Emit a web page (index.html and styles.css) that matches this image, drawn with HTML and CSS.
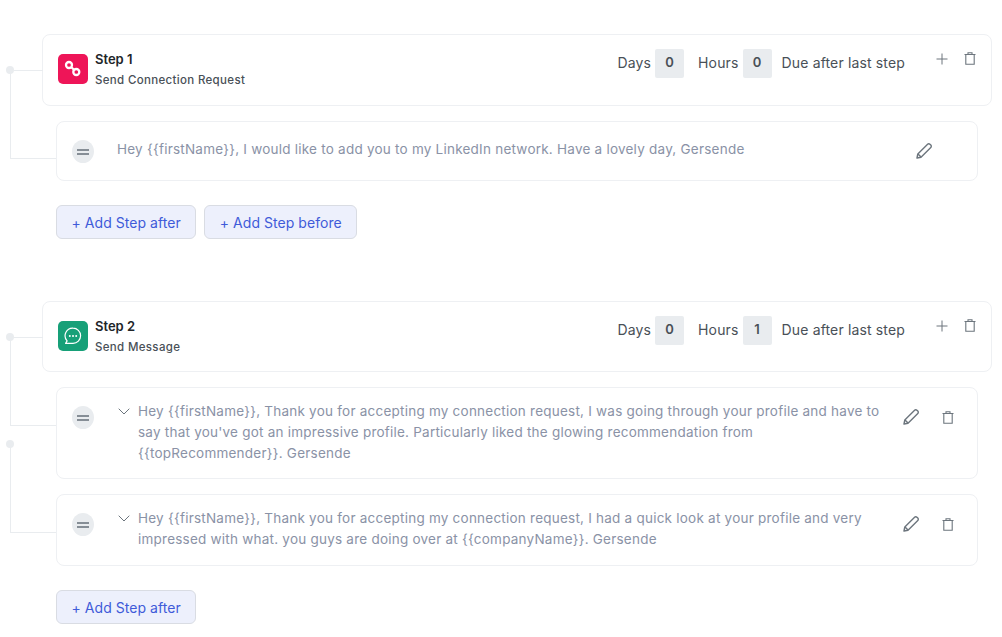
FILE: index.html
```html
<!DOCTYPE html>
<html lang="en">

<head>
    <meta charset="UTF-8">
    <meta name="viewport" content="width=device-width, initial-scale=1.0">
    <title>Sequence</title>
    <link rel="stylesheet" href="styles.css">
</head>

<body>
    <main class="Sequence">
        <!-- STEP 1 -->
        <section class="Step">
            <header class="Step-card">
                <span class="Step-dot"></span>
                <div class="Step-icon Step-icon--pink">
                    <svg width="18" height="18" viewBox="0 0 18 18" fill="none" stroke="#fff" stroke-width="2.3">
                        <circle cx="5" cy="5" r="3" />
                        <circle cx="12.3" cy="12" r="3" />
                        <path d="M7 7l3.3 3" />
                    </svg>
                </div>
                <div class="Step-info">
                    <h2 class="Step-title">Step 1</h2>
                    <p class="Step-type">Send Connection Request</p>
                </div>
                <div class="Step-delay">
                    <span class="Step-label">Days</span>
                    <span class="Step-value">0</span>
                    <span class="Step-label Step-label--hours">Hours</span>
                    <span class="Step-value">0</span>
                    <span class="Step-label Step-label--due">Due after last step</span>
                </div>
                <div class="Step-actions">
                    <svg class="Icon" width="12" height="12" viewBox="0 0 12 12" fill="none" stroke="#6c757d" stroke-width="1">
                        <path d="M6 .5v11M.5 6h11" />
                    </svg>
                    <svg class="Icon" width="12" height="13" viewBox="0 0 12 13" fill="none" stroke="#6c757d" stroke-width="1.1">
                        <path d="M.5 2.5h11M4 2.5V.8h4v1.7M1.8 2.5v9.8h8.4V2.5" />
                    </svg>
                </div>
            </header>

            <article class="Message Message--short">
                <span class="Message-line"></span>
                <span class="Message-handle"><i></i><i></i></span>
                <p class="Message-text">Hey {{firstName}}, I would like to add you to my LinkedIn network. Have a lovely day, Gersende</p>
                <div class="Message-actions">
                    <svg class="Icon" width="16" height="16" viewBox="0 0 16 16" fill="none" stroke="#6c757d" stroke-width="1.4" stroke-linejoin="round">
                        <path d="M1 15l.8-4L11.6 1.2a1.6 1.6 0 0 1 2.3 0l.9.9a1.6 1.6 0 0 1 0 2.3L5 14.2z" />
                        <path d="M2 11l3 3" />
                    </svg>
                </div>
            </article>

            <div class="Step-buttons">
                <button class="Button">+ Add Step after</button>
                <button class="Button">+ Add Step before</button>
            </div>
        </section>

        <!-- STEP 2 -->
        <section class="Step">
            <header class="Step-card Step-card--second">
                <span class="Step-dot"></span>
                <div class="Step-icon Step-icon--green">
                    <svg width="18" height="18" viewBox="0 0 18 18" fill="none">
                        <path d="M9 1.2a7.6 7.6 0 0 1 0 15.2H1.6l1.5-2.5A7.6 7.6 0 0 1 9 1.2z" stroke="#fff" stroke-width="1.2" stroke-linejoin="round" />
                        <circle cx="5.8" cy="8.9" r="1" fill="#fff" />
                        <circle cx="9" cy="8.9" r="1" fill="#fff" />
                        <circle cx="12.2" cy="8.9" r="1" fill="#fff" />
                    </svg>
                </div>
                <div class="Step-info">
                    <h2 class="Step-title">Step 2</h2>
                    <p class="Step-type">Send Message</p>
                </div>
                <div class="Step-delay">
                    <span class="Step-label">Days</span>
                    <span class="Step-value">0</span>
                    <span class="Step-label Step-label--hours">Hours</span>
                    <span class="Step-value">1</span>
                    <span class="Step-label Step-label--due">Due after last step</span>
                </div>
                <div class="Step-actions">
                    <svg class="Icon" width="12" height="12" viewBox="0 0 12 12" fill="none" stroke="#6c757d" stroke-width="1">
                        <path d="M6 .5v11M.5 6h11" />
                    </svg>
                    <svg class="Icon" width="12" height="13" viewBox="0 0 12 13" fill="none" stroke="#6c757d" stroke-width="1.1">
                        <path d="M.5 2.5h11M4 2.5V.8h4v1.7M1.8 2.5v9.8h8.4V2.5" />
                    </svg>
                </div>
            </header>

            <article class="Message">
                <span class="Message-line"></span>
                <span class="Message-handle"><i></i><i></i></span>
                <svg class="Message-chevron" width="12" height="7" viewBox="0 0 12 7" fill="none" stroke="#6c757d" stroke-width="1">
                    <path d="M.7.7L6 6l5.3-5.3" />
                </svg>
                <p class="Message-text">Hey {{firstName}}, Thank you for accepting my connection request, I was going through your profile and have to<br>say that you've got an impressive profile. Particularly liked the glowing recommendation from<br>{{topRecommender}}. Gersende</p>
                <div class="Message-actions">
                    <svg class="Icon" width="16" height="16" viewBox="0 0 16 16" fill="none" stroke="#6c757d" stroke-width="1.4" stroke-linejoin="round">
                        <path d="M1 15l.8-4L11.6 1.2a1.6 1.6 0 0 1 2.3 0l.9.9a1.6 1.6 0 0 1 0 2.3L5 14.2z" />
                        <path d="M2 11l3 3" />
                    </svg>
                    <svg class="Icon" width="12" height="13" viewBox="0 0 12 13" fill="none" stroke="#6c757d" stroke-width="1.1">
                        <path d="M.5 2.5h11M4 2.5V.8h4v1.7M1.8 2.5v9.8h8.4V2.5" />
                    </svg>
                </div>
            </article>

            <article class="Message">
                <span class="Message-line"></span>
                <span class="Message-handle"><i></i><i></i></span>
                <svg class="Message-chevron" width="12" height="7" viewBox="0 0 12 7" fill="none" stroke="#6c757d" stroke-width="1">
                    <path d="M.7.7L6 6l5.3-5.3" />
                </svg>
                <p class="Message-text">Hey {{firstName}}, Thank you for accepting my connection request, I had a quick look at your profile and very<br>impressed with what. you guys are doing over at {{companyName}}. Gersende</p>
                <div class="Message-actions">
                    <svg class="Icon" width="16" height="16" viewBox="0 0 16 16" fill="none" stroke="#6c757d" stroke-width="1.4" stroke-linejoin="round">
                        <path d="M1 15l.8-4L11.6 1.2a1.6 1.6 0 0 1 2.3 0l.9.9a1.6 1.6 0 0 1 0 2.3L5 14.2z" />
                        <path d="M2 11l3 3" />
                    </svg>
                    <svg class="Icon" width="12" height="13" viewBox="0 0 12 13" fill="none" stroke="#6c757d" stroke-width="1.1">
                        <path d="M.5 2.5h11M4 2.5V.8h4v1.7M1.8 2.5v9.8h8.4V2.5" />
                    </svg>
                </div>
            </article>

            <div class="Step-buttons">
                <button class="Button">+ Add Step after</button>
            </div>
        </section>
    </main>
</body>

</html>
```

FILE: styles.css
```css
/* VARIABLES */
:root {
    --color-border: #eef0f3;
    --color-line: #e9ecef;
    --color-text: #8a92a6;
    --color-dark: #495057;
    --color-blue: #3f5bd9;
}

/* RESET */
* {
    margin: 0;
    padding: 0;
    box-sizing: border-box;
    font-family: Inter, "Noto Sans", sans-serif;
}

body {
    background-color: #fff;
    overflow: hidden;
}

.Sequence {
    padding: 34px 10px 0 42px;
    display: flex;
    flex-direction: column;
    gap: 62px;
}

.Step {
    display: flex;
    flex-direction: column;
}

/* STEP HEADER */
.Step-card {
    position: relative;
    height: 72px;
    padding: 14px 15px 0 15px;
    display: flex;
    align-items: flex-start;
    border: 1px solid var(--color-border);
    border-radius: 8px;
}

.Step-card--second {
    height: 71px;
}

.Step-dot {
    position: absolute;
    left: -37px;
    top: 31px;
    width: 8px;
    height: 8px;
    border-radius: 50%;
    background-color: var(--color-line);
}

.Step-dot::after {
    content: "";
    position: absolute;
    left: 8px;
    top: 4px;
    width: 29px;
    height: 1px;
    background-color: var(--color-line);
}

.Step-icon {
    width: 30px;
    height: 30px;
    margin-top: 5px;
    margin-right: 7px;
    border-radius: 5px;
    display: flex;
    align-items: center;
    justify-content: center;
}

.Step-icon--pink {
    background-color: #ee1558;
}

.Step-icon--green {
    background-color: #17a078;
}

.Step-info {
    flex: 1;
}

.Step-title {
    font-size: 13px;
    line-height: 20px;
    font-weight: 600;
    color: #212529;
}

.Step-type {
    margin-top: 1px;
    font-size: 11.5px;
    line-height: 20px;
    font-weight: 500;
    letter-spacing: 0.33px;
    color: var(--color-dark);
}

.Step-delay {
    display: flex;
    align-items: center;
    margin-right: 31px;
}

.Step-label {
    font-size: 14px;
    letter-spacing: 0.15px;
    line-height: 27px;
    height: 29px;
    color: var(--color-dark);
}

.Step-label--hours {
    margin-left: 14px;
}

.Step-label--due {
    margin-left: 10px;
}

.Step-value {
    width: 29px;
    height: 29px;
    margin-left: 4px;
    border-radius: 2px;
    background-color: var(--color-line);
    font-size: 13px;
    font-weight: 600;
    line-height: 27px;
    text-align: center;
    color: var(--color-dark);
}

.Step-actions {
    display: flex;
    align-items: center;
    gap: 16px;
    margin-top: 3px;
}

.Icon {
    display: block;
}

/* MESSAGES */
.Message {
    position: relative;
    min-height: 72px;
    margin-top: 15px;
    margin-left: 14px;
    margin-right: 14px;
    padding: 13px 0 14px 60px;
    display: flex;
    align-items: flex-start;
    border: 1px solid var(--color-border);
    border-radius: 8px;
}

.Message--short {
    min-height: 60px;
    padding-top: 17px;
}

.Message-line {
    position: absolute;
    left: -47px;
    top: -50px;
    width: 46px;
    height: 88px;
    border-left: 1px solid var(--color-line);
    border-bottom: 1px solid var(--color-line);
}

.Message--short .Message-line {
    top: -51px;
}

.Message + .Message::before {
    content: "";
    position: absolute;
    left: -51px;
    top: -55px;
    width: 8px;
    height: 8px;
    border-radius: 50%;
    background-color: var(--color-line);
}

.Message-handle {
    position: absolute;
    left: 15px;
    top: 18px;
    width: 22px;
    height: 23px;
    border-radius: 50%;
    background-color: var(--color-line);
    display: flex;
    flex-direction: column;
    align-items: center;
    justify-content: center;
    gap: 2px;
}

.Message-handle i {
    display: block;
    width: 12px;
    height: 2px;
    background-color: #868e96;
}

.Message-chevron {
    flex-shrink: 0;
    margin-top: 7px;
    margin-left: 1px;
    margin-right: 8px;
}

.Message-text {
    flex: 1;
    font-size: 13.5px;
    letter-spacing: 0.23px;
    line-height: 21px;
    color: var(--color-text);
}

.Message-actions {
    position: absolute;
    top: 21px;
    right: 23px;
    display: flex;
    align-items: center;
    gap: 23px;
}

.Message--short .Message-actions {
    right: 45px;
}

/* BUTTONS */
.Step-buttons {
    margin-top: 24px;
    margin-left: 14px;
    display: flex;
    gap: 8px;
}

.Button {
    height: 34px;
    padding: 0 14.5px;
    border: 1px solid #d9dce3;
    border-radius: 6px;
    background-color: #edf0fc;
    color: var(--color-blue);
    font-size: 14px;
    font-weight: 400;
    letter-spacing: 0.05px;
}
```
